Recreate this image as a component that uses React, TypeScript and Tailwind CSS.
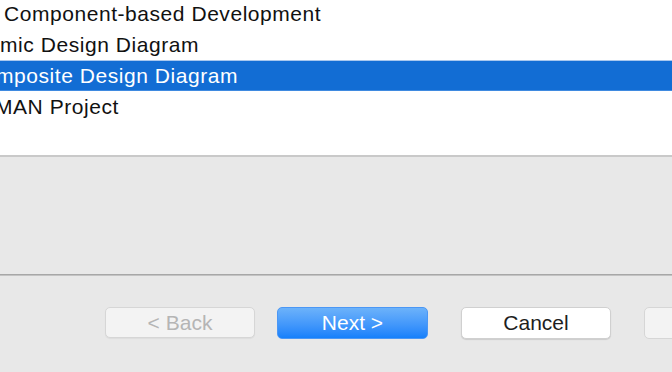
const rows = [
  { label: "Component-based Development", indent: "pl-[4px]" },
  { label: "mic Design Diagram", indent: "pl-0" },
  { label: "mposite Design Diagram", indent: "-ml-[4px]", selected: true },
  { label: "MAN Project", indent: "-ml-[5px]" },
];

export default function App() {
  return (
    <div className="flex h-[372px] w-[672px] flex-col overflow-hidden bg-[#e8e8e8] font-['Liberation_Sans',Arial,sans-serif]">
      <div className="h-[155px] shrink-0 overflow-hidden bg-white">
        <div className="-mt-[2px] flex flex-col">
          {rows.map((row) => (
            <div
              key={row.label}
              className={
                row.selected
                  ? "flex h-[31px] items-center border-t border-[#a9c8ee] border-b border-b-[#3f8ae0] bg-[#126dd4] text-white"
                  : "flex h-[31px] items-center text-[#111]"
              }
            >
              <span className={`whitespace-nowrap text-[21px] tracking-[0.55px] ${row.indent}`}>{row.label}</span>
            </div>
          ))}
        </div>
      </div>
      <div className="h-[2px] shrink-0 bg-[#c9c9c9]" />
      <div className="h-[117px] shrink-0 bg-[#e8e8e8]" />
      <div className="h-[1px] shrink-0 bg-[#a7a7a7]" />
      <div className="h-[1px] shrink-0 bg-[#c3c3c3]" />
      <div className="flex flex-1 items-start pl-[105px] pt-[31px]">
        <button className="flex h-[31px] w-[150px] shrink-0 items-center justify-center rounded-[5px] border border-[#d6d6d6] bg-[#f3f3f3] text-[21px] text-[#b5b5b5] shadow-[0_1px_1px_rgba(0,0,0,0.05)]">
          &lt; Back
        </button>
        <button className="ml-[22px] flex h-[32px] w-[151px] shrink-0 items-center justify-center rounded-[5px] border border-[#4b97f5] bg-gradient-to-b from-[#6cb2fa] to-[#1480fb] text-[21px] text-white">
          Next &gt;
        </button>
        <button className="ml-[33px] flex h-[32px] w-[150px] shrink-0 items-center justify-center rounded-[5px] border border-[#d0d0d0] bg-white text-[21px] text-[#1e1e1e] shadow-[0_1px_1px_rgba(0,0,0,0.12)]">
          Cancel
        </button>
        <button className="ml-[33px] flex h-[32px] w-[150px] shrink-0 items-center justify-center rounded-[5px] border border-[#d6d6d6] bg-[#f3f3f3] text-[21px] text-[#b5b5b5]">
          Finish
        </button>
      </div>
    </div>
  );
}
